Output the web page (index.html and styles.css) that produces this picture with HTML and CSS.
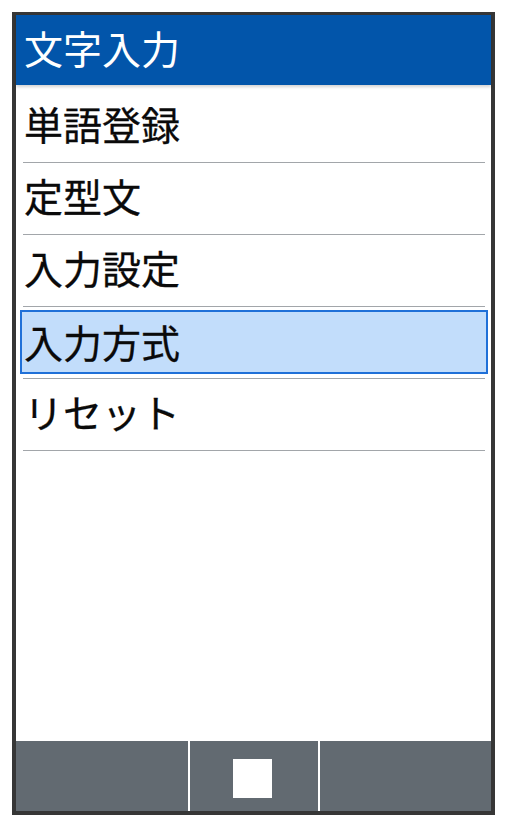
FILE: index.html
```html
<!DOCTYPE html>
<html lang="ja">
<head>
    <meta charset="UTF-8">
    <meta name="viewport" content="width=device-width, initial-scale=1.0">
    <title>文字入力</title>
    <link rel="stylesheet" href="styles.css">
</head>
<body>
    <div class="phone">
        <div class="header">文字入力</div>

        <div class="menu">
            <div class="item first"><span class="label">単語登録</span></div>
            <div class="item"><span class="label">定型文</span></div>
            <div class="item"><span class="label">入力設定</span></div>
            <div class="item selected"><span class="label">入力方式</span></div>
            <div class="item"><span class="label">リセット</span></div>
        </div>

        <!-- soft keys -->
        <div class="softkeys">
            <div class="key"></div>
            <div class="key center"><div class="square"></div></div>
            <div class="key"></div>
        </div>
    </div>
</body>
</html>
```

FILE: styles.css
```css
body {
    margin: 0;
    background: white;
    font-family: "Noto Sans CJK JP", "Noto Sans", sans-serif;
}
.phone {
    margin: 12px 0 0 12px;
    width: 475px;
    height: 796px;
    border-style: solid;
    border-color: #363636;
    border-width: 3px 4px 4px 4px;
    background: white;
    display: flex;
    flex-direction: column;
}
.header {
    height: 70px;
    line-height: 64px;
    background: #0255aa;
    color: white;
    font-size: 39px;
    padding-left: 8px;
    box-shadow: 0 2px 3px rgba(0,0,0,0.18);
    position: relative;
}
.menu {
    flex: 1;
}
.item {
    margin: 0 6px 0 7px;
    height: 71px;
    border-bottom: 1px solid #a2a6aa;
    display: flex;
}
.item.first {
    height: 71px;
    padding-top: 6px;
}
.label {
    flex: 1;
    font-size: 39px;
    line-height: 64px;
    color: #0a0a0a;
    padding-left: 1px;
    -webkit-text-stroke: 0.3px #0a0a0a;
}
.item.selected .label {
    margin: 3px -3px 4px -3px;
    border: 2px solid #1f70d8;
    background: #c2ddfb;
    line-height: 58px;
    padding-left: 2px;
}
.softkeys {
    height: 70px;
    display: grid;
    grid-template-columns: 172px 128px 1fr;
    gap: 2px;
    background: white;
}
.key {
    background: #626a71;
}
.key.center {
    padding: 18px 0 0 43px;
}
.square {
    width: 39px;
    height: 39px;
    background: white;
}
```
